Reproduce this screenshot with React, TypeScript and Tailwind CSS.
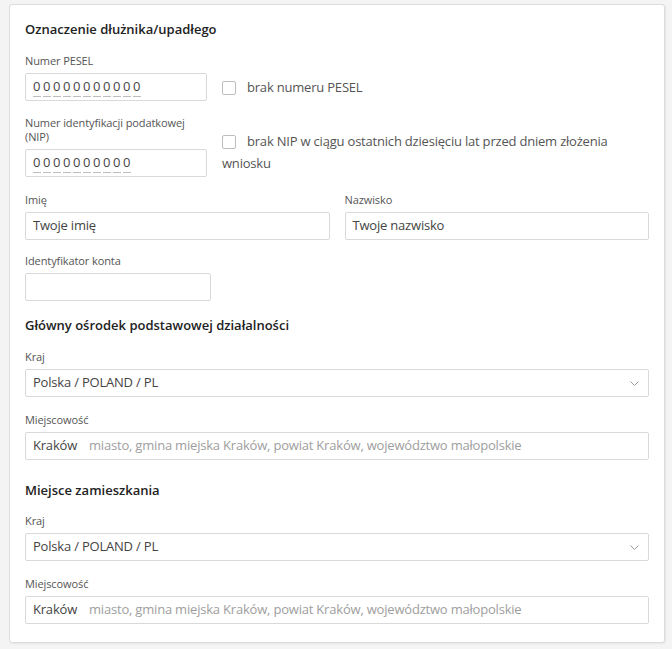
import React from 'react';

function Label({ children }: { children: React.ReactNode }) {
  return <div className="text-[11px] leading-[14px] tracking-[-0.1px] text-[#555] mb-[5px]">{children}</div>;
}

function TextBox({ value, className = '' }: { value?: string; className?: string }) {
  return (
    <div
      className={`h-[28px] border border-[#d9d9d9] rounded-[2px] bg-white px-[7px] flex items-center text-[13px] tracking-[-0.2px] text-[#444] ${className}`}
    >
      {value}
    </div>
  );
}

function MaskedDigits({ count }: { count: number }) {
  return (
    <div className="h-[28px] border border-[#d9d9d9] rounded-[2px] bg-white px-[7px] flex items-center">
      <div className="flex text-[13px] leading-[15px] text-[#444] mt-[2px]">
        {Array.from({ length: count }).map((_, i) => (
          <span key={i} className="w-[10px] shrink-0">
            <span className="block w-[7.5px] text-center border-b border-[#bdbdbd] pb-[2px]">0</span>
          </span>
        ))}
      </div>
    </div>
  );
}

function CheckOption({ children }: { children: React.ReactNode }) {
  return (
    <div className="text-[13px] leading-[22px] tracking-[-0.2px] text-[#555] pb-[3px]">
      <span className="inline-block w-[14px] h-[14px] border border-[#bdbdbd] rounded-[2px] bg-white align-[-3px] mr-[11px]" />
      {children}
    </div>
  );
}

function SelectBox({ value }: { value: string }) {
  return (
    <div className="h-[28px] border border-[#d9d9d9] rounded-[2px] bg-white pl-[7px] pr-[9px] flex items-center justify-between text-[13px] tracking-[-0.2px] text-[#444]">
      <span>{value}</span>
      <svg width="9" height="5" viewBox="0 0 9 5">
        <polyline points="0.5,0.5 4.5,4.5 8.5,0.5" fill="none" stroke="#9a9a9a" strokeWidth="1" />
      </svg>
    </div>
  );
}

function PlaceBox() {
  return (
    <div className="h-[28px] border border-[#d9d9d9] rounded-[2px] bg-white px-[7px] flex items-center text-[13px] tracking-[-0.2px]">
      <span className="text-[#444]">Kraków</span>
      <span className="ml-[12px] text-[#9e9e9e]">
        miasto, gmina miejska Kraków, powiat Kraków, województwo małopolskie
      </span>
    </div>
  );
}

function SectionTitle({ children, className = '' }: { children: React.ReactNode; className?: string }) {
  return (
    <h3 className={`text-[13px] leading-[18px] font-semibold text-[#222] ${className}`}>{children}</h3>
  );
}

export default function App() {
  return (
    <div className="min-h-screen bg-[#f4f4f4] pt-1 pl-[9px] pb-[6px] font-['Open_Sans',sans-serif]">
      <div className="w-[656px] bg-white border border-[#dcdcdc] rounded-[3px] shadow-[1px_1px_2px_rgba(0,0,0,0.06)] px-[15px] pt-[15px] pb-[18px]">
        <SectionTitle className="mb-4">Oznaczenie dłużnika/upadłego</SectionTitle>

        <div className="flex items-end gap-[15px] mb-[15px]">
          <div className="w-[182px] shrink-0">
            <Label>Numer PESEL</Label>
            <MaskedDigits count={11} />
          </div>
          <CheckOption>brak numeru PESEL</CheckOption>
        </div>

        <div className="flex items-end gap-[15px] mb-4">
          <div className="w-[182px] shrink-0">
            <Label>Numer identyfikacji podatkowej (NIP)</Label>
            <MaskedDigits count={10} />
          </div>
          <CheckOption>brak NIP w ciągu ostatnich dziesięciu lat przed dniem złożenia wniosku</CheckOption>
        </div>

        <div className="grid grid-cols-2 gap-x-[15px] mb-[14px]">
          <div>
            <Label>Imię</Label>
            <TextBox value="Twoje imię" />
          </div>
          <div>
            <Label>Nazwisko</Label>
            <TextBox value="Twoje nazwisko" />
          </div>
        </div>

        <div className="mb-[15px]">
          <Label>Identyfikator konta</Label>
          <TextBox className="w-[186px]" />
        </div>

        <SectionTitle className="mb-4">Główny ośrodek podstawowej działalności</SectionTitle>

        <div className="mb-4">
          <Label>Kraj</Label>
          <SelectBox value="Polska / POLAND / PL" />
        </div>

        <div className="mb-[21px]">
          <Label>Miejscowość</Label>
          <PlaceBox />
        </div>

        <SectionTitle className="mb-[15px]">Miejsce zamieszkania</SectionTitle>

        <div className="mb-4">
          <Label>Kraj</Label>
          <SelectBox value="Polska / POLAND / PL" />
        </div>

        <div>
          <Label>Miejscowość</Label>
          <PlaceBox />
        </div>
      </div>
    </div>
  );
}
